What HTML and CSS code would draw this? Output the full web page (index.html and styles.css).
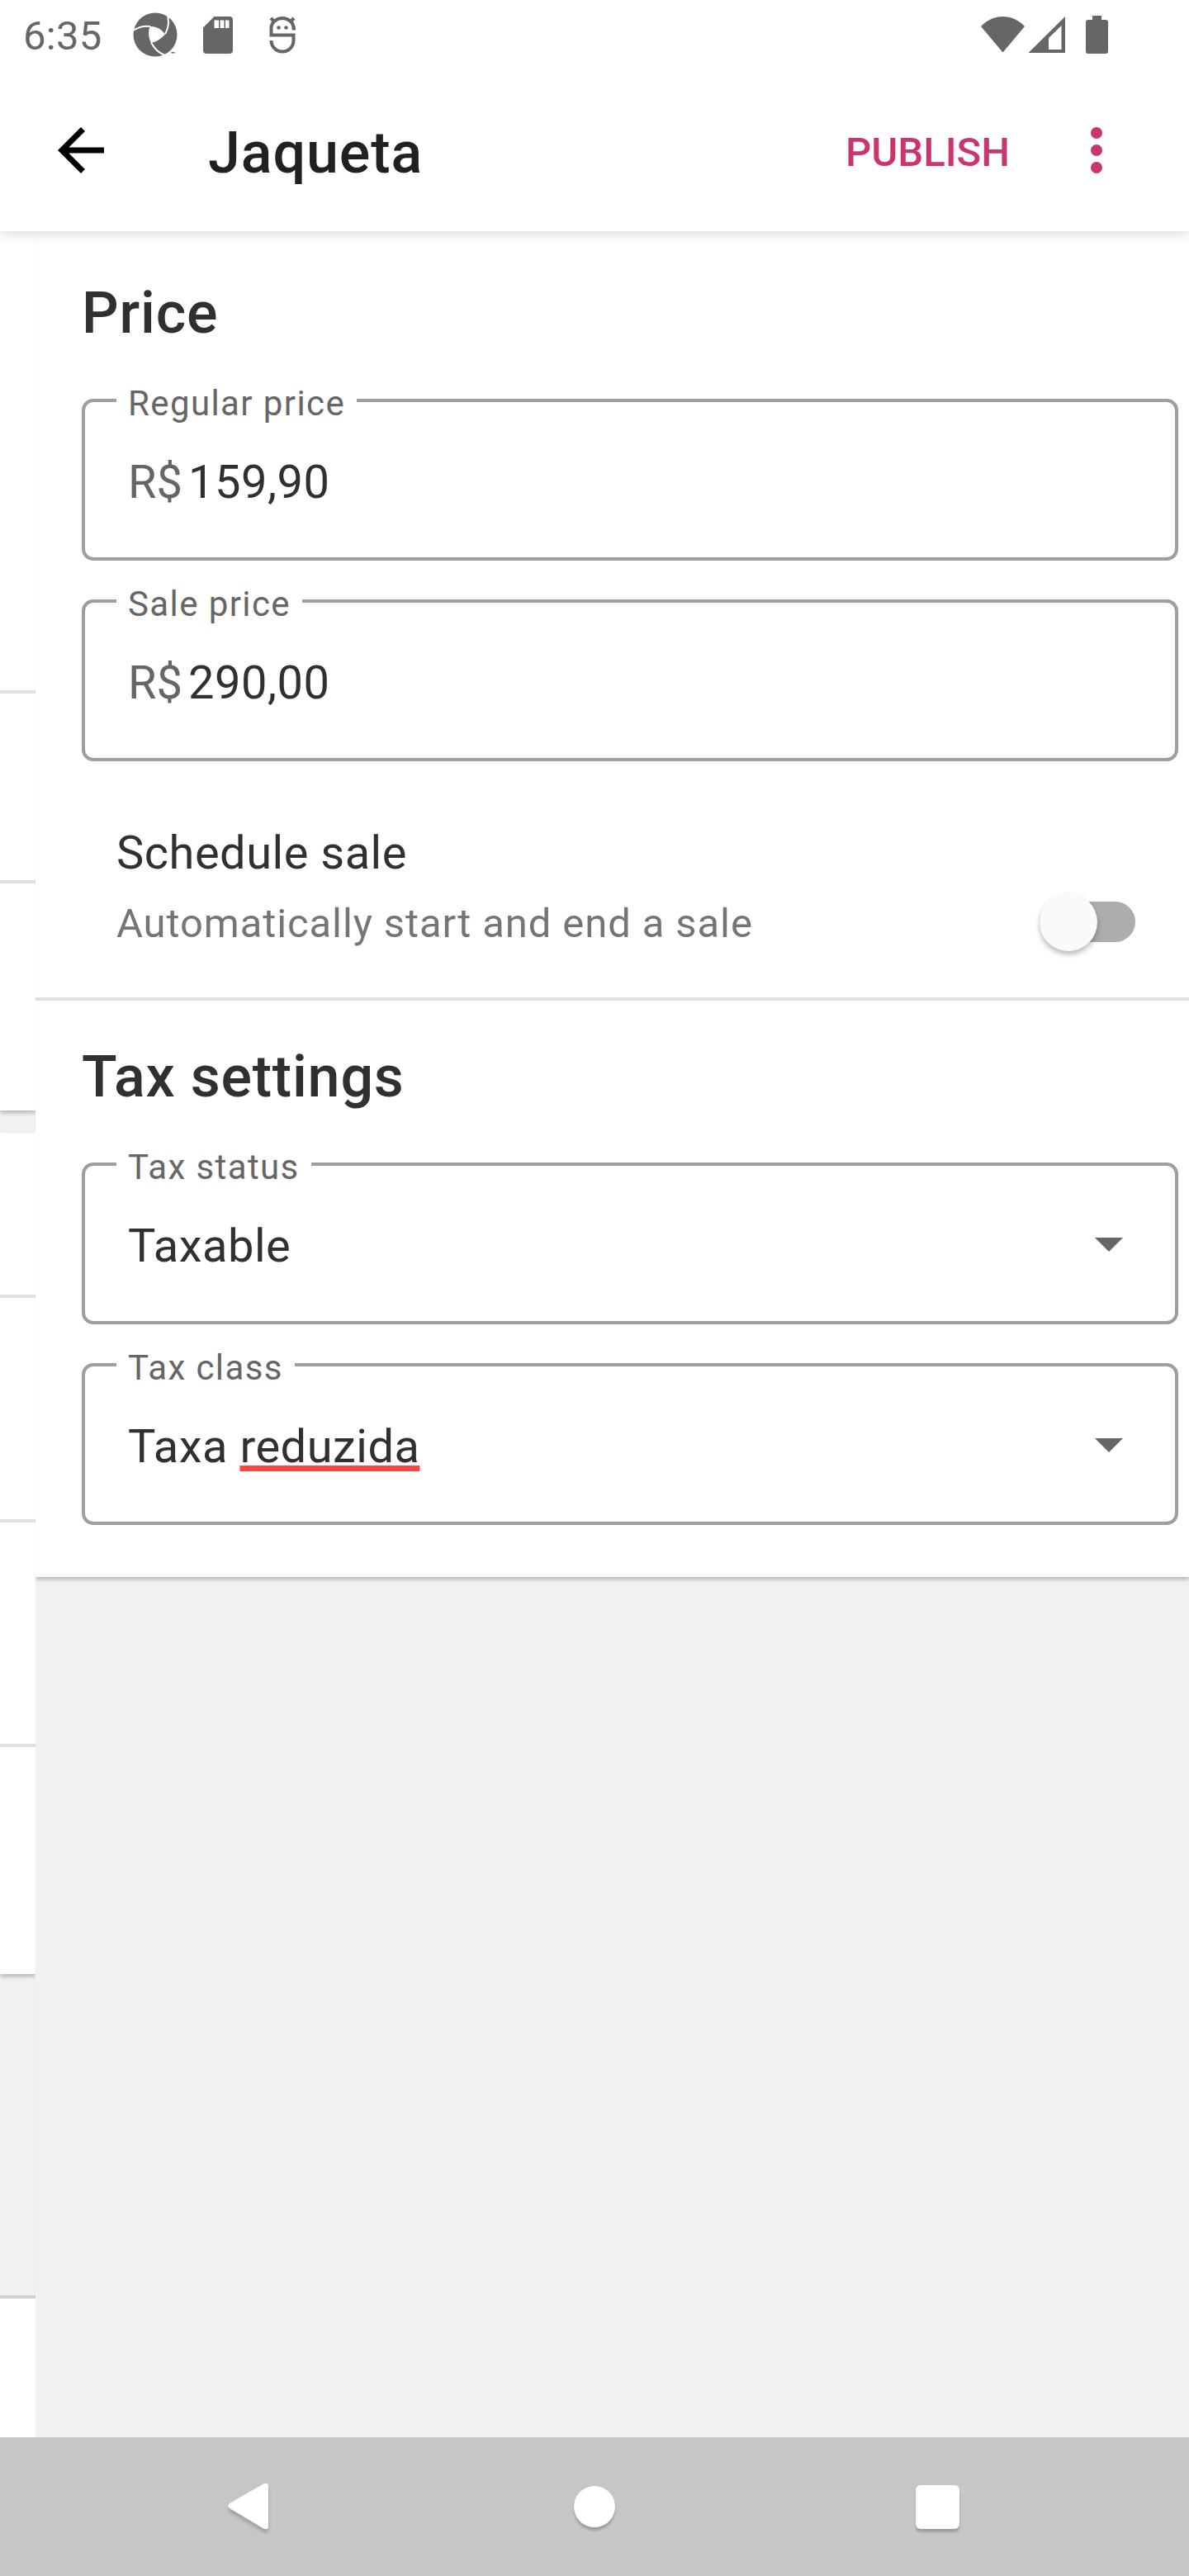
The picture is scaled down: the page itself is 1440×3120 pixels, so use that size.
FILE: index.html
```
<!DOCTYPE html>
<html lang="en">
<head>
<meta charset="utf-8">
<title>Jaqueta</title>
<link rel="stylesheet" href="styles.css">
</head>
<body>
<div class="screen">
  <header class="top">
    <div class="status">
      <span class="clock">6:35</span>
      <svg class="ic-aperture" viewBox="0 0 54 54" width="54" height="54">
        <circle cx="27" cy="27" r="26.5" fill="#666"/>
        <path d="M20.500 17C28 16.500 34 20 39 26.500C34 32 29 35.500 22 37C18.500 30 18.500 23 20.500 17Z" fill="#fff"/>
        <path d="M0 22C7 17.500 14 16 21 17M41 1C44 9 43.500 18 39 26M22 36.500C26 44 31 49 38 51.500" fill="none" stroke="#fff" stroke-width="2"/>
        <path d="M40 0L54 0L54 12L43.500 6Z M36 53L44 48L54 48L54 54L36 54Z" fill="#fff"/>
        <path d="M46.500 48h4v1.500h-4z" fill="#666"/>
      </svg>
      <svg class="ic-sd" viewBox="0 0 36 45" width="36" height="45">
        <path fill="#666" fill-rule="evenodd" d="M13.500 0H32a4 4 0 0 1 4 4V41a4 4 0 0 1-4 4H4a4 4 0 0 1-4-4V13.500ZM13.500 4.500V14H19V4.500ZM20.500 4.500V14H25.500V4.500ZM27 4.500V14H31.500V4.500Z"/>
      </svg>
      <svg class="ic-bug" viewBox="0 0 32 45" width="32" height="45">
        <g fill="none" stroke="#666" stroke-width="4">
          <path d="M32 14.500H27.500M29.500 16V14C29.500 7 23 2 16 2S2.500 7 2.500 14V22.500H29.500V29C29.500 37 23 42.500 16 42.500S2.500 37 2.500 29"/>
          <path d="M2 2L6 6M30 2L26 6"/>
        </g>
        <circle cx="11.500" cy="13.500" r="2.300" fill="#666"/><circle cx="20.500" cy="13.500" r="2.300" fill="#666"/>
      </svg>
      <svg class="ic-signal" viewBox="0 0 154 46" width="154" height="46">
        <g fill="#666">
          <path d="M0 13C15-3 38-3 53 13L26.500 44.500Z"/>
          <path fill-rule="evenodd" d="M57.500 45L102 1V45ZM82 27V41H97.500V12Z"/>
          <path d="M135 0h11v5h5a3 3 0 0 1 3 3v35a3 3 0 0 1-3 3h-21a3 3 0 0 1-3-3v-35a3 3 0 0 1 3-3h5z"/>
        </g>
      </svg>
    </div>
    <div class="appbar">
      <svg class="back" viewBox="0 0 56 56" width="56" height="56">
        <path fill="#000" d="M56 24.500H13.400L32.950 4.950L28 0L0 28L28 56L32.950 51.050L13.400 31.500H56Z"/>
      </svg>
      <h1 class="title">Jaqueta</h1>
      <span class="publish">PUBLISH</span>
      <svg class="more" viewBox="0 0 14 56" width="14" height="56">
        <g fill="#c9356e"><circle cx="7" cy="7" r="7"/><circle cx="7" cy="28" r="7"/><circle cx="7" cy="49" r="7"/></g>
      </svg>
    </div>
  </header>

  <div class="content">
    <aside class="behind">
      <div class="bcard first"><i class="r1"></i><i class="r2"></i></div>
      <div class="bcard second"><i class="r3"></i><i class="r4"></i><i class="r5"></i></div>
      <div class="bcard third"></div>
    </aside>
    <main class="panel">
      <div class="card">
        <section class="price">
          <h2>Price</h2>
          <fieldset><legend>Regular price</legend><div class="value"><span class="cur">R$</span><span>159,90</span></div></fieldset>
          <fieldset><legend>Sale price</legend><div class="value"><span class="cur">R$</span><span>290,00</span></div></fieldset>
          <div class="schedule">
            <div class="texts">
              <div class="name">Schedule sale</div>
              <div class="hint">Automatically start and end a sale</div>
            </div>
            <div class="switch"><div class="thumb"></div></div>
          </div>
        </section>
        <section class="tax">
          <h2>Tax settings</h2>
          <fieldset><legend>Tax status</legend><div class="value"><span>Taxable</span><i class="caret"></i></div></fieldset>
          <fieldset><legend>Tax class</legend><div class="value"><span>Taxa <span class="misspelt">reduzida</span></span><i class="caret"></i></div></fieldset>
        </section>
      </div>
    </main>
  </div>

  <nav class="navbar">
    <svg viewBox="0 0 60 70" width="60" height="70"><path d="M44 6.500L3 30Q-.5 33 3 36L44 60.500Q50 63 50 58V9Q50 4 44 6.500Z" fill="#fff"/></svg>
    <div class="home"></div>
    <div class="recent"></div>
  </nav>
</div>
</body>
</html>
```
FILE: styles.css
```
* { box-sizing: border-box; }
body { margin: 0; font-family: Roboto, "Noto Sans", sans-serif; background: #fff; }
h1, h2 { margin: 0; font-weight: 500; font-size: 70px; }
i { display: block; }
svg { display: block; flex: none; }

.screen { width: 1440px; height: 3120px; display: flex; flex-direction: column; overflow: hidden; }

.top { height: 280px; background: #fff; flex: none; z-index: 1; box-shadow: 0 3px 14px rgba(0,0,0,.15); }
.status { height: 84px; display: flex; align-items: flex-start; padding-left: 28px; color: #666; }
.clock { font-size: 49px; line-height: 58px; margin-top: 15px; width: 133px; letter-spacing: .3px; }
.ic-aperture { margin-top: 15px; }
.ic-sd { margin: 20px 0 0 31px; }
.ic-bug { margin: 20px 0 0 44px; }
.ic-signal { margin: 19px 98px 0 auto; }

.appbar { height: 196px; display: flex; align-items: center; padding: 0 105px 0 70px; }
.title { margin-left: 126px; line-height: 82px; margin-top: 6px; color: #212121; letter-spacing: .9px; }
.publish { margin-left: auto; margin-top: 5px; font-size: 49px; font-weight: 500; color: #c9356e; line-height: 58px; }
.more { margin-left: 98px; }

.content { flex: 1; display: flex; min-height: 0; }
.behind { width: 43px; background: #f1f1f1; display: flex; flex-direction: column; }
.bcard { background: #fff; box-shadow: 0 3px 5px rgba(0,0,0,.25); flex: none; }
.bcard i { height: 4px; background: #e0e0e0; }
.first { height: 1065px; padding-top: 556px; }
.r2 { margin-top: 226px; }
.second { height: 1019px; margin-top: 27px; padding-top: 196px; }
.r4 { margin-top: 268px; }
.r5 { margin-top: 268px; }
.third { height: 172px; margin-top: 389px; border-top: 4px solid #d2d2d2; box-shadow: none; }

.panel { flex: 1; background: #f1f1f1; box-shadow: -1px 0 0 rgba(0,0,0,.02); }
.card { height: 1630px; background: #fff; box-shadow: 0 3px 5px rgba(0,0,0,.25); clip-path: inset(0 0 -12px 0); }
.card section { padding-left: 56px; padding-right: 13px; }
.card .price { height: 932px; padding-top: 58px; border-bottom: 4px solid #e0e0e0; }
.card .tax { padding-top: 51px; }
h2 { line-height: 82px; color: #303030; letter-spacing: .8px; }

fieldset { margin: 0; padding: 0 52px; border: 4px solid #9e9e9e; border-radius: 14px; height: 223px; min-width: 0; }
h2 + fieldset { margin-top: 36px; }
fieldset + fieldset { margin-top: 20px; }
legend { padding: 8px 14px 0; margin-left: -14px; font-size: 42px; line-height: 50px; color: #666; letter-spacing: 1.4px; }
.value { height: 103px; padding-top: 37px; display: flex; align-items: center; font-size: 56px; line-height: 66px; color: #303030; letter-spacing: .5px; }
.cur { color: #666; width: 73px; letter-spacing: 0; }
.caret { margin: 0 11px 3px auto; border: 17.500px solid transparent; border-top-color: #666; border-bottom: 0; }
.misspelt { text-decoration: underline #ff4444 7px; text-underline-offset: 4px; text-decoration-skip-ink: none; }

.schedule { display: flex; padding: 78px 52px 0 42px; justify-content: space-between; }
.name { font-size: 56px; line-height: 66px; color: #303030; letter-spacing: .5px; }
.hint { font-size: 49px; line-height: 58px; margin-top: 24px; color: #757575; letter-spacing: .9px; }
.switch { width: 116px; height: 49px; border-radius: 25px; background: #adadad; margin-top: 92px; display: flex; align-items: center; }
.thumb { width: 70px; height: 70px; border-radius: 50%; background: #fafafa; box-shadow: 0 4px 6px rgba(0,0,0,.28); flex: none; }

.navbar { height: 168px; flex: none; background: #c6c6c6; z-index: 1; display: flex; align-items: center; padding-left: 275px; }
.navbar svg { margin-top: 2px; filter: drop-shadow(0 4px 2px rgba(0,0,0,.2)); }
.home { width: 50px; height: 50px; border-radius: 50%; background: #fff; margin-left: 360px; box-shadow: 0 4px 3px rgba(0,0,0,.2); }
.recent { width: 53px; height: 53px; border-radius: 6px; background: #fff; margin-left: 364px; box-shadow: 0 4px 3px rgba(0,0,0,.2); }
```
